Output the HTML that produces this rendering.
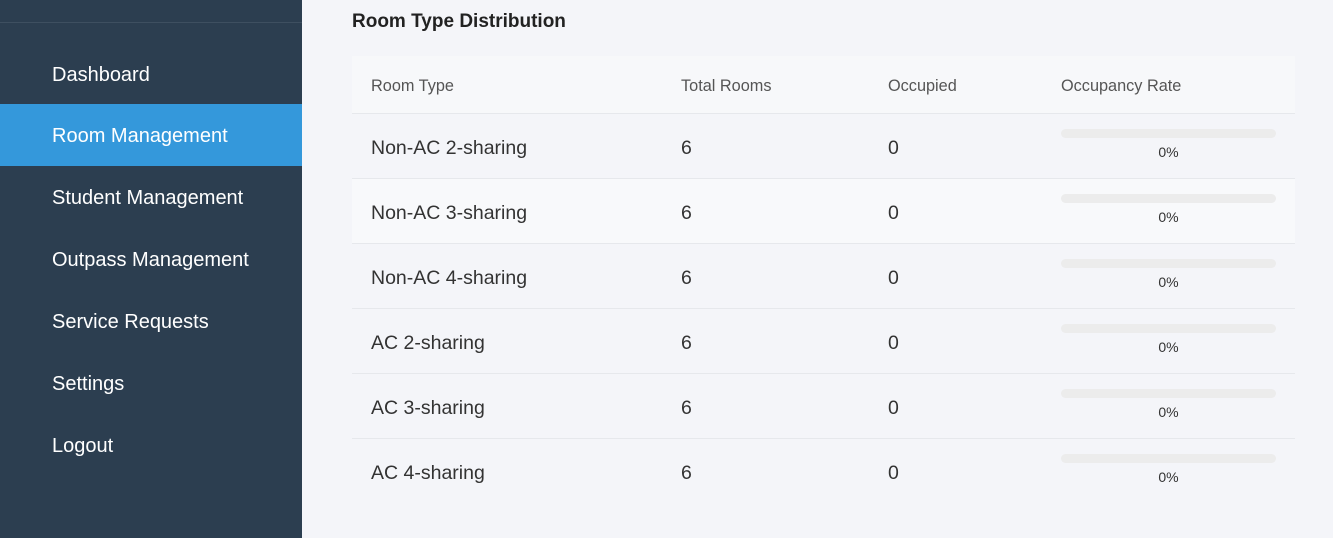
<!DOCTYPE html><html><head><style>
body{margin:0;width:1333px;height:538px;overflow:hidden;background:#f4f5f9;font-family:"Liberation Sans",sans-serif;position:relative}
.sb{position:absolute;left:0;top:0;width:302px;height:538px;background:#2c3e50}
.sb .ln{position:absolute;top:22px;left:0;width:302px;height:1px;background:#3e4f60}
.it{position:absolute;left:0;width:302px;height:62px;line-height:64px;padding-left:52px;box-sizing:border-box;color:#fff;font-size:20px}
.act{background:#3498db}
h2{position:absolute;left:352px;top:11px;margin:0;font-size:19px;font-weight:bold;color:#222}
.tb{position:absolute;left:352px;top:56px;width:943px}
.r{position:relative;height:65px;border-bottom:1px solid #e6e8ec;box-sizing:border-box;font-size:19.5px;color:#333}
.r.h{height:58px;background:#f7f8fa;font-size:16.3px;color:#555}
.r.alt{background:#f8f9fb}
.r span{position:absolute;top:23px}
.r.h span{top:21px}
.bar{position:absolute;left:709px;top:15px;width:215px;height:9px;border-radius:5px;background:#ececec}
.p{position:absolute;left:709px;width:215px;text-align:center;top:30px;font-size:14px;color:#333}
</style></head><body>
<div class="sb"><div class="ln"></div>
<div class="it" style="top:43px">Dashboard</div>
<div class="it act" style="top:104px">Room Management</div>
<div class="it" style="top:166px">Student Management</div>
<div class="it" style="top:228px">Outpass Management</div>
<div class="it" style="top:290px">Service Requests</div>
<div class="it" style="top:352px">Settings</div>
<div class="it" style="top:414px">Logout</div>
</div>
<h2>Room Type Distribution</h2>
<div class="tb">
<div class="r h"><span style="left:19px">Room Type</span><span style="left:329px">Total Rooms</span><span style="left:536px">Occupied</span><span style="left:709px">Occupancy Rate</span></div>
<div class="r"><span style="left:19px">Non-AC 2-sharing</span><span style="left:329px">6</span><span style="left:536px">0</span><div class="bar"></div><div class="p">0%</div></div>
<div class="r alt"><span style="left:19px">Non-AC 3-sharing</span><span style="left:329px">6</span><span style="left:536px">0</span><div class="bar"></div><div class="p">0%</div></div>
<div class="r"><span style="left:19px">Non-AC 4-sharing</span><span style="left:329px">6</span><span style="left:536px">0</span><div class="bar"></div><div class="p">0%</div></div>
<div class="r"><span style="left:19px">AC 2-sharing</span><span style="left:329px">6</span><span style="left:536px">0</span><div class="bar"></div><div class="p">0%</div></div>
<div class="r"><span style="left:19px">AC 3-sharing</span><span style="left:329px">6</span><span style="left:536px">0</span><div class="bar"></div><div class="p">0%</div></div>
<div class="r" style="border-bottom:none"><span style="left:19px">AC 4-sharing</span><span style="left:329px">6</span><span style="left:536px">0</span><div class="bar"></div><div class="p">0%</div></div>
</div>
</body></html>
